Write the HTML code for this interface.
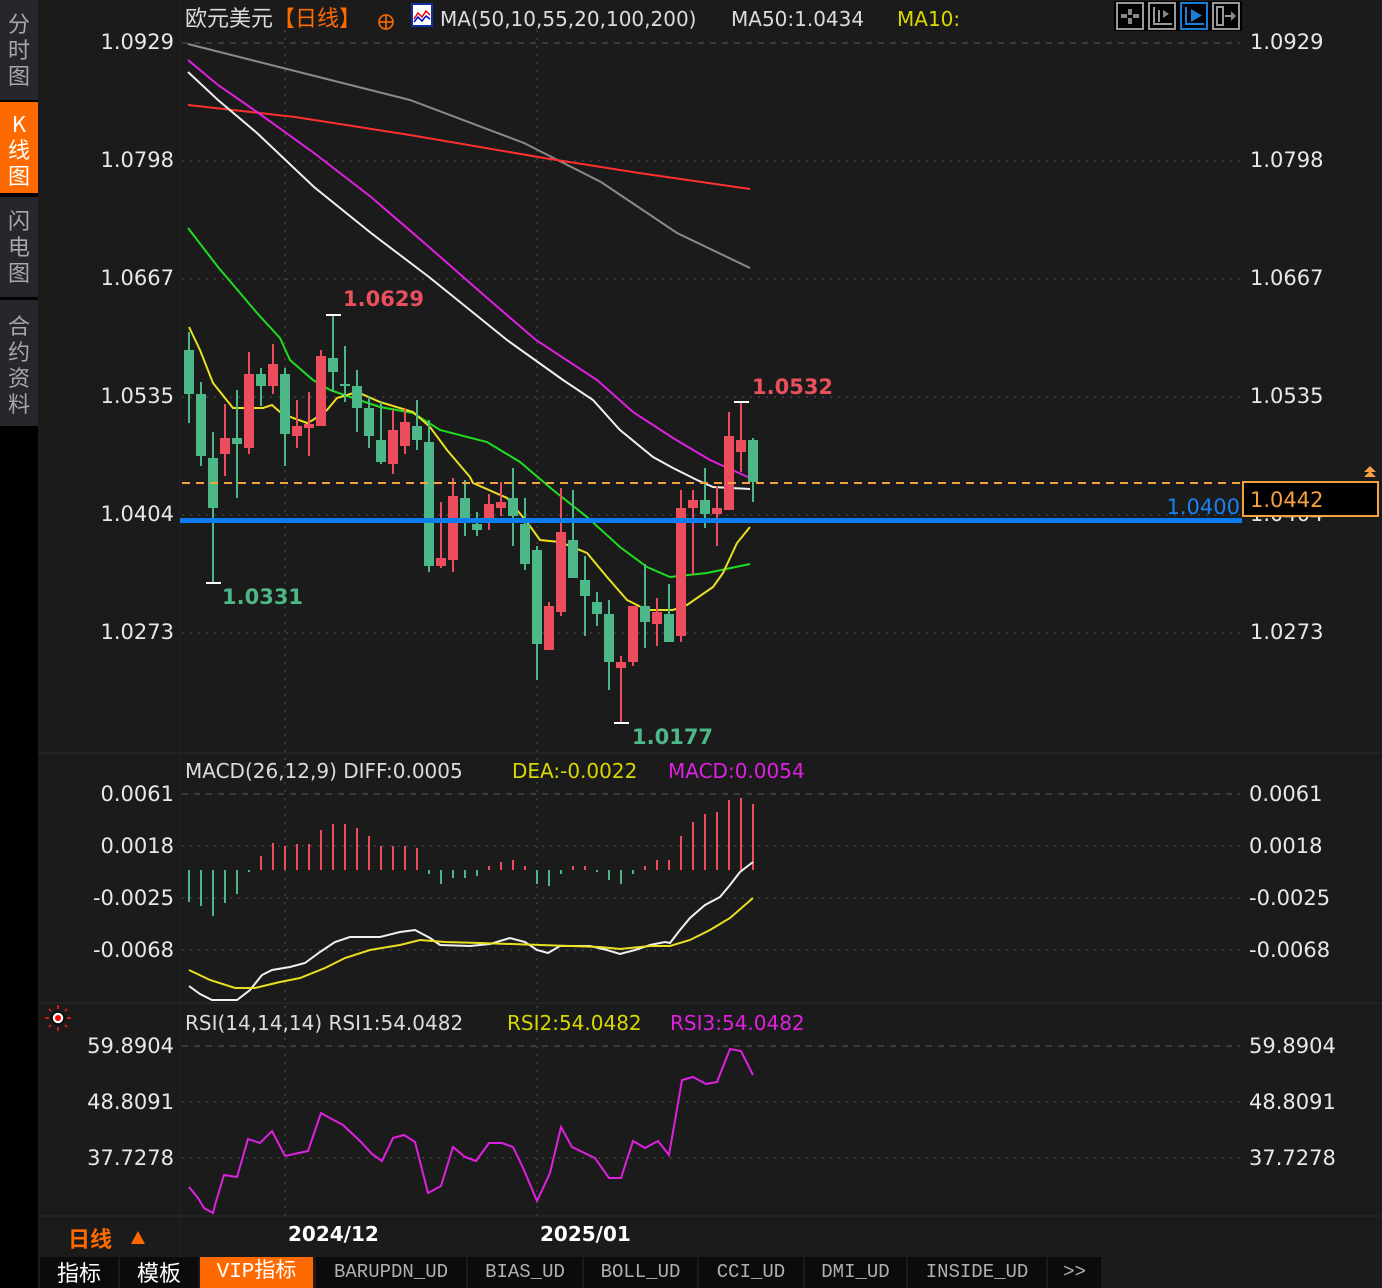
<!DOCTYPE html>
<html><head><meta charset="utf-8">
<style>
html,body{margin:0;padding:0;background:#1b1b1b;width:1382px;height:1288px;overflow:hidden;font-family:"DejaVu Sans","Noto Sans CJK SC",sans-serif;}
#side{position:absolute;left:0;top:0;width:38px;height:1288px;background:#000;}
.tab{position:absolute;left:0;width:38px;background:#26272c;color:#a8a8a8;font-size:22px;line-height:26px;text-align:center;font-family:"Noto Sans CJK SC",sans-serif;}
.tabs{position:absolute;top:1257px;height:31px;background:#0b0b0b;color:#b0b0b0;font-family:"Liberation Mono","Noto Sans CJK SC",monospace;font-size:19px;line-height:31px;text-align:center;}
</style></head><body>
<div id="side"></div>
<div class="tab" style="top:0;height:100px;padding-top:10px;box-sizing:border-box">分<br>时<br>图</div>
<div class="tab" style="top:102px;height:91px;background:#ff6a00;color:#fff;padding-top:8px;box-sizing:border-box">K<br>线<br>图</div>
<div class="tab" style="top:197px;height:100px;padding-top:10px;box-sizing:border-box">闪<br>电<br>图</div>
<div class="tab" style="top:300px;height:126px;padding-top:12px;box-sizing:border-box">合<br>约<br>资<br>料</div>

<svg width="1382" height="1288" style="position:absolute;left:0;top:0" xmlns="http://www.w3.org/2000/svg" font-family="DejaVu Sans, Noto Sans CJK SC, sans-serif">
<rect x="38" y="0" width="1344" height="1257" fill="#1b1b1b"/>
<g stroke="#232323" stroke-width="2"><line x1="38" y1="753" x2="1382" y2="753"/><line x1="38" y1="1003" x2="1382" y2="1003"/><line x1="38" y1="1216" x2="1382" y2="1216"/><line x1="180" y1="0" x2="180" y2="1257" stroke-width="1"/></g>
<g stroke="#3a3a3a" stroke-width="2" stroke-dasharray="6,6">
<line x1="182" y1="43" x2="1240" y2="43"/><line x1="182" y1="794" x2="1240" y2="794"/><line x1="182" y1="1046" x2="1240" y2="1046"/>
</g>
<g stroke="#363636" stroke-width="2" stroke-dasharray="2,6">
<line x1="182" y1="161" x2="1240" y2="161"/><line x1="182" y1="279" x2="1240" y2="279"/><line x1="182" y1="397" x2="1240" y2="397"/><line x1="182" y1="515" x2="1240" y2="515"/><line x1="182" y1="633" x2="1240" y2="633"/>
<line x1="182" y1="846" x2="1240" y2="846"/><line x1="182" y1="898" x2="1240" y2="898"/><line x1="182" y1="950" x2="1240" y2="950"/>
<line x1="182" y1="1102" x2="1240" y2="1102"/><line x1="182" y1="1158" x2="1240" y2="1158"/>
<line x1="285" y1="30" x2="285" y2="1222"/><line x1="537" y1="30" x2="537" y2="1222"/>
</g>
<g fill="#e8e8e8" font-size="21" text-anchor="end">
<text x="174" y="49">1.0929</text><text x="174" y="167">1.0798</text><text x="174" y="285">1.0667</text><text x="174" y="403">1.0535</text><text x="174" y="521">1.0404</text><text x="174" y="639">1.0273</text>
<text x="174" y="801">0.0061</text><text x="174" y="853">0.0018</text><text x="174" y="905">-0.0025</text><text x="174" y="957">-0.0068</text>
<text x="174" y="1053">59.8904</text><text x="174" y="1109">48.8091</text><text x="174" y="1165">37.7278</text>
</g>
<g fill="#e8e8e8" font-size="21">
<text x="1250" y="49">1.0929</text><text x="1250" y="167">1.0798</text><text x="1250" y="285">1.0667</text><text x="1250" y="403">1.0535</text><text x="1250" y="521">1.0404</text><text x="1250" y="639">1.0273</text>
<text x="1249" y="801">0.0061</text><text x="1249" y="853">0.0018</text><text x="1249" y="905">-0.0025</text><text x="1249" y="957">-0.0068</text>
<text x="1249" y="1053">59.8904</text><text x="1249" y="1109">48.8091</text><text x="1249" y="1165">37.7278</text>
</g>
<text x="185" y="26" font-size="22" fill="#dcdcdc" font-family="Noto Sans CJK SC, sans-serif">欧元美元<tspan fill="#ff6a00">【日线】</tspan></text>
<g stroke="#ff6a00" stroke-width="1.6" fill="none"><circle cx="386" cy="22" r="7"/><line x1="379" y1="22" x2="393" y2="22"/><line x1="386" y1="15" x2="386" y2="29"/></g>
<rect x="412" y="4" width="20" height="22" fill="#fff" stroke="#1030a0" stroke-width="2"/>
<polyline points="414,19 418,13 422,17 426,11 430,15" stroke="#e00" fill="none" stroke-width="1.5"/><polyline points="414,22 418,17 422,21 426,16 430,19" stroke="#00c" fill="none" stroke-width="1.5"/>
<text x="440" y="26" font-size="20" fill="#dcdcdc">MA(50,10,55,20,100,200)</text>
<text x="731" y="26" font-size="20" fill="#dcdcdc">MA50:1.0434</text>
<text x="897" y="26" font-size="20" fill="#d8d800">MA10:</text>
<rect x="1114" y="1" width="128" height="30" fill="#000"/>
<g fill="none" stroke-width="2"><rect x="1117" y="3" width="26" height="26" stroke="#999"/><rect x="1149" y="3" width="26" height="26" stroke="#999"/><rect x="1181" y="3" width="26" height="26" stroke="#1a7fd4"/><rect x="1213" y="3" width="26" height="26" stroke="#999"/></g>
<g fill="#888"><rect x="1128" y="9" width="4" height="6"/><rect x="1128" y="18" width="4" height="6"/><rect x="1121" y="14" width="6" height="4"/><rect x="1133" y="14" width="6" height="4"/></g>
<g stroke="#999" stroke-width="2" fill="none"><polyline points="1154,7 1154,24 1172,24"/><line x1="1159" y1="10" x2="1159" y2="22"/><path d="M1163 10v8l6-4z" fill="#888" stroke="none"/></g>
<g stroke="#1a7fd4" stroke-width="2" fill="none"><polyline points="1186,7 1186,24 1204,24"/><path d="M1191 9v13l11-6.5z" fill="#1a7fd4" stroke="none"/></g>
<g stroke="#999" stroke-width="2" fill="none"><rect x="1217" y="7" width="6" height="18"/><path d="M1225 16h8" /><path d="M1231 11l5 5-5 5z" fill="#888" stroke="none"/></g>
<g fill="none" stroke-width="2">
<polyline stroke="#8a8a8a" points="188,44 283,68 410,100 524,143 601,182 677,233 750,268"/>
<polyline stroke="#ff3030" points="188,105 295,117 410,135 544,158 639,173 750,189"/>
<polyline stroke="#e020e0" points="188,60 218,85 257,112 314,153 371,197 429,247 486,297 536,340 597,380 633,412 673,438 710,460 750,478"/>
<polyline stroke="#f0f0f0" points="188,72 218,100 257,133 314,187 371,233 429,277 486,323 507,340 563,380 593,400 620,430 653,457 673,468 697,480 713,487 750,489"/>
<polyline stroke="#20dd20" points="188,228 218,267 257,313 280,338 290,360 313,380 330,390 353,398 380,407 413,413 440,430 487,442 520,462 553,490 587,517 620,547 647,567 670,577 707,573 750,564"/>
<polyline stroke="#e8e020" points="189,327 200,350 213,383 233,408 263,408 272,405 280,412 293,418 307,423 313,420 327,410 337,398 357,392 380,402 413,412 430,427 447,450 470,477 473,483 507,498 527,522 540,540 560,542 587,553 607,577 627,600 647,610 673,610 687,605 713,587 723,573 737,543 750,527"/>
</g>
<g id="candles"></g>
<g stroke="#fff" stroke-width="2"><line x1="326" y1="315" x2="341" y2="315"/><line x1="206" y1="583" x2="221" y2="583"/><line x1="614" y1="723" x2="629" y2="723"/><line x1="734" y1="402" x2="749" y2="402"/></g>
<g font-size="21" font-weight="bold">
<text x="343" y="306" fill="#e8505e">1.0629</text><text x="752" y="394" fill="#e8505e">1.0532</text>
<text x="222" y="604" fill="#4db887">1.0331</text><text x="632" y="744" fill="#4db887">1.0177</text>
</g>
<line x1="182" y1="483" x2="1370" y2="483" stroke="#f7a040" stroke-width="2" stroke-dasharray="8,6"/>
<rect x="180" y="518" width="1062" height="5" fill="#0a7cf0"/>
<text x="1240" y="514" font-size="21" fill="#1a80f0" text-anchor="end">1.0400</text>
<rect x="1243" y="482" width="135" height="34" fill="#000" stroke="#f7a040" stroke-width="2"/>
<text x="1250" y="507" font-size="21" fill="#f7a040">1.0442</text>
<path d="M1370 466l-6 6h12zM1370 471l-6 6h12z" fill="#f7a040"/>
<text x="185" y="778" font-size="20" fill="#dcdcdc">MACD(26,12,9) DIFF:0.0005</text>
<text x="512" y="778" font-size="20" fill="#d8d800">DEA:-0.0022</text>
<text x="668" y="778" font-size="20" fill="#e020e0">MACD:0.0054</text>
<g id="hist"></g>
<g fill="none" stroke-width="2">
<polyline stroke="#f0f0f0" points="189,986 200,994 212,1000 237,1000 250,990 262,975 272,970 290,967 305,963 320,952 335,942 350,937 380,937 400,932 415,930 430,938 440,945 470,946 490,944 510,938 525,942 537,950 548,953 560,946 590,946 607,950 620,954 635,950 650,945 665,942 670,943 680,930 690,918 705,905 720,897 730,885 740,872 753,862"/>
<polyline stroke="#e8e020" points="189,970 210,980 235,988 255,988 280,982 300,978 325,968 345,958 370,950 400,945 420,940 445,942 480,943 540,945 600,947 620,949 650,946 670,946 690,940 710,930 730,918 753,898"/>
</g>
<g stroke="#ff2020" stroke-width="1.5"><line x1="58" y1="1005" x2="58" y2="1009"/><line x1="58" y1="1027" x2="58" y2="1031"/><line x1="45" y1="1018" x2="49" y2="1018"/><line x1="67" y1="1018" x2="71" y2="1018"/><line x1="49" y1="1009" x2="51" y2="1011"/><line x1="65" y1="1025" x2="67" y2="1027"/><line x1="67" y1="1009" x2="65" y2="1011"/><line x1="49" y1="1027" x2="51" y2="1025"/></g>
<circle cx="58" cy="1018" r="6" fill="#fff" stroke="#000" stroke-width="1.5"/><circle cx="58" cy="1018" r="3" fill="#ff0000"/>
<text x="185" y="1030" font-size="20" fill="#dcdcdc">RSI(14,14,14) RSI1:54.0482</text>
<text x="507" y="1030" font-size="20" fill="#d8d800">RSI2:54.0482</text>
<text x="670" y="1030" font-size="20" fill="#e020e0">RSI3:54.0482</text>
<polyline fill="none" stroke="#e020e0" stroke-width="2" points="189,1187 198,1198 204,1208 213,1213 215,1205 224,1175 237,1177 248,1139 260,1143 272,1131 285,1156 308,1151 321,1113 328,1117 343,1125 361,1142 372,1154 382,1161 393,1138 404,1135 415,1142 428,1193 441,1186 453,1147 465,1157 476,1161 489,1143 502,1143 513,1147 524,1170 537,1201 550,1173 561,1127 572,1147 595,1158 609,1178 621,1178 633,1141 645,1148 658,1141 669,1155 682,1080 693,1077 706,1084 717,1082 730,1049 741,1051 753,1075"/>
<text x="68" y="1247" font-size="22" font-weight="bold" fill="#ff6a00" font-family="Noto Sans CJK SC, sans-serif">日线</text>
<path d="M131 1244l7-13 7 13z" fill="#ff6a00"/>
<g font-size="20" font-weight="bold" fill="#fff"><text x="288" y="1241">2024/12</text><text x="540" y="1241">2025/01</text></g>
<rect x="38" y="1257" width="1344" height="31" fill="#1b1b1b"/>
</svg>
<div class="tabs" style="left:40px;width:78px;color:#fff;font-family:'Noto Sans CJK SC',sans-serif;font-size:22px">指标</div>
<div class="tabs" style="left:120px;width:78px;color:#fff;font-family:'Noto Sans CJK SC',sans-serif;font-size:22px">模板</div>
<div class="tabs" style="left:200px;width:113px;background:#ff6a00;color:#fff;font-size:21px">VIP指标</div>
<div class="tabs" style="left:316px;width:150px">BARUPDN_UD</div>
<div class="tabs" style="left:468px;width:114px">BIAS_UD</div>
<div class="tabs" style="left:584px;width:113px">BOLL_UD</div>
<div class="tabs" style="left:699px;width:104px">CCI_UD</div>
<div class="tabs" style="left:805px;width:101px">DMI_UD</div>
<div class="tabs" style="left:908px;width:138px">INSIDE_UD</div>
<div class="tabs" style="left:1048px;width:53px">&gt;&gt;</div>
<script>
var R="#eb4d5c",G="#4db887";
var c=[[189,"g",332,423,350,394],[201,"g",382,466,394,456],[213,"g",432,583,458,508],[225,"r",404,476,438,454],[237,"g",390,498,438,444],[249,"r",352,454,374,448],[261,"g",368,406,374,386],[273,"r",344,394,364,386],[285,"g",368,466,374,434],[297,"r",400,448,426,436],[309,"r",392,456,424,428],[321,"r",350,426,356,426],[333,"g",315,392,358,372],[345,"g",346,402,384,386],[357,"g",370,432,386,408],[369,"g",397,448,408,436],[381,"g",402,464,440,462],[393,"r",410,474,430,464],[405,"r",408,454,422,446],[417,"g",400,450,426,440],[429,"g",420,572,442,566],[441,"r",502,568,558,566],[453,"r",478,572,496,560],[465,"g",480,536,498,518],[477,"g",512,536,524,530],[489,"r",494,530,504,518],[501,"r",482,516,502,508],[513,"g",468,546,498,516],[525,"g",498,570,524,564],[537,"g",546,680,550,644],[549,"r",602,650,606,650],[561,"r",488,616,532,612],[573,"g",490,578,540,578],[585,"g",556,636,580,596],[597,"g",592,626,602,614],[609,"g",600,690,614,662],[621,"r",656,723,662,668],[633,"r",606,666,606,662],[645,"g",564,648,606,622],[657,"r",598,646,612,624],[669,"g",584,642,614,642],[681,"r",490,642,508,636],[693,"r",490,574,500,508],[705,"g",468,528,500,514],[717,"r",486,546,508,514],[729,"r",412,510,436,510],[741,"r",402,472,440,452],[753,"g",438,502,440,482]];
var s="";c.forEach(function(d){var col=d[1]=="r"?R:G;s+='<rect x="'+(d[0]-1)+'" y="'+d[2]+'" width="2" height="'+(d[3]-d[2])+'" fill="'+col+'"/><rect x="'+(d[0]-5)+'" y="'+d[4]+'" width="10" height="'+Math.max(2,d[5]-d[4])+'" fill="'+col+'"/>';});
document.getElementById("candles").innerHTML=s;
var h=[[189,902],[201,906],[213,916],[225,903],[237,894],[249,872],[261,856],[273,843],[285,846],[297,844],[309,844],[321,830],[333,824],[345,824],[357,828],[369,836],[381,846],[393,846],[405,846],[417,848],[429,874],[441,884],[453,878],[465,878],[477,876],[489,866],[501,862],[513,860],[525,866],[537,884],[549,886],[561,874],[573,866],[585,866],[597,872],[609,880],[621,884],[633,874],[645,866],[657,860],[669,860],[681,836],[693,822],[705,814],[717,812],[729,800],[741,798],[753,804]];
var z=870,t="";h.forEach(function(d){var up=d[1]<z;t+='<rect x="'+(d[0]-1)+'" y="'+(up?d[1]:z)+'" width="2" height="'+Math.abs(d[1]-z)+'" fill="'+(up?R:G)+'"/>';});
document.getElementById("hist").innerHTML=t;
</script>
</body></html>
